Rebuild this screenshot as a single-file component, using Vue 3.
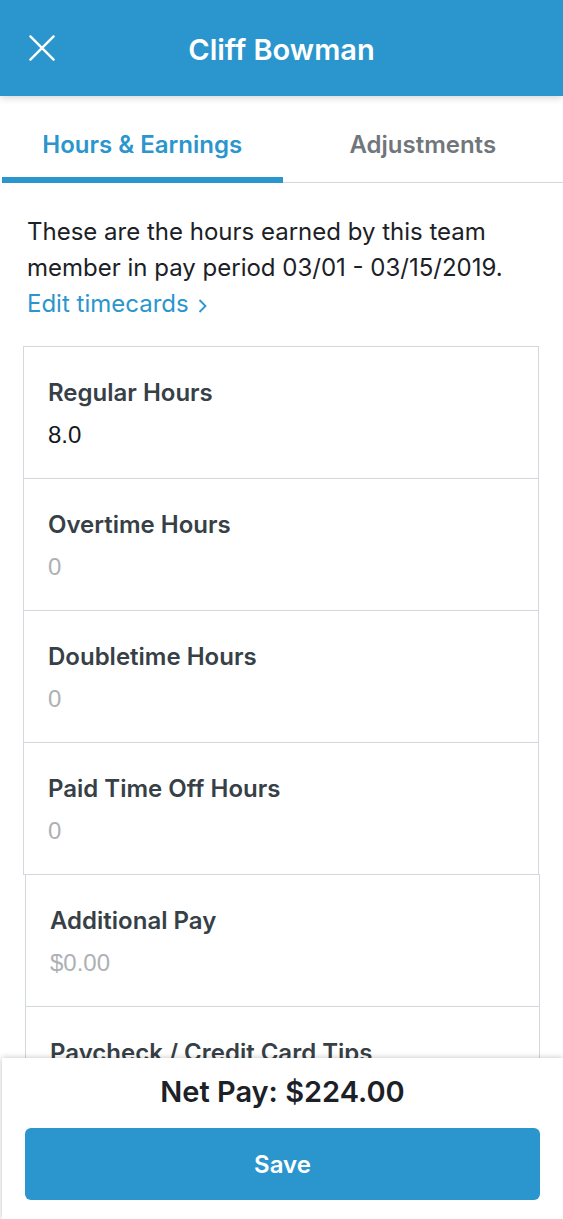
<script setup>
import { ref } from 'vue'

const activeTab = ref('hours')
const tabs = [
  { id: 'hours', label: 'Hours & Earnings' },
  { id: 'adjustments', label: 'Adjustments' },
]

const hourFields = ref([
  { id: 'regular', label: 'Regular Hours', value: '8.0', placeholder: '0' },
  { id: 'overtime', label: 'Overtime Hours', value: '', placeholder: '0' },
  { id: 'doubletime', label: 'Doubletime Hours', value: '', placeholder: '0' },
  { id: 'pto', label: 'Paid Time Off Hours', value: '', placeholder: '0' },
])

const payFields = ref([
  { id: 'additional', label: 'Additional Pay', value: '', placeholder: '$0.00' },
  { id: 'tips', label: 'Paycheck / Credit Card Tips', value: '', placeholder: '$0.00' },
])
</script>

<template>
  <div class="screen">
    <header class="bar">
      <button class="close" type="button" aria-label="Close">
        <svg width="28" height="28" viewBox="0 0 28 28" fill="none" stroke="#fff" stroke-width="2.4" stroke-linecap="round">
          <path d="M2.4 2.4 25.6 25.6M25.6 2.4 2.4 25.6" />
        </svg>
      </button>
      <h1 class="title">Cliff Bowman</h1>
    </header>

    <nav class="tabs" role="tablist">
      <button
        v-for="tab in tabs"
        :key="tab.id"
        type="button"
        role="tab"
        class="tab"
        :class="{ active: activeTab === tab.id }"
        :aria-selected="activeTab === tab.id"
        @click="activeTab = tab.id"
      >{{ tab.label }}</button>
    </nav>

    <main class="content">
      <p class="intro">
        These are the hours earned by this team member in pay period 03/01 - 03/15/2019.
        <a class="edit" href="#timecards">Edit timecards<svg class="chevron" width="10" height="16" viewBox="0 0 10 16" fill="none" stroke="currentColor" stroke-width="1.8"><path d="M1.5 2 7.5 8 1.5 14" /></svg></a>
      </p>

      <div class="group hours">
        <div v-for="field in hourFields" :key="field.id" class="field">
          <label class="label" :for="field.id">{{ field.label }}</label>
          <input :id="field.id" v-model="field.value" class="value" type="text" inputmode="decimal" :placeholder="field.placeholder">
        </div>
      </div>
      <div class="group pay">
        <div v-for="field in payFields" :key="field.id" class="field">
          <label class="label" :for="field.id">{{ field.label }}</label>
          <input :id="field.id" v-model="field.value" class="value" type="text" inputmode="decimal" :placeholder="field.placeholder">
        </div>
      </div>
    </main>

    <footer class="footer">
      <p class="net">Net Pay: $224.00</p>
      <button class="save" type="button">Save</button>
    </footer>
  </div>
</template>

<style>
body {
  background: #fff;
}
</style>

<style scoped>
.screen {
  display: flex;
  flex-direction: column;
  height: 100vh;
  overflow: hidden;
  background: #fff;
  color: #1b2126;
  font-family: Inter, "Liberation Sans", sans-serif;
  font-size: 24px;
}

button {
  border: 0;
  padding: 0;
  background: none;
  font: inherit;
  cursor: pointer;
}

.bar {
  position: relative;
  z-index: 1;
  flex: none;
  display: grid;
  grid-template-columns: 56px 1fr 56px;
  align-items: center;
  height: 96px;
  background: #2b96cd;
  box-shadow: 0 1px 8px rgba(0, 0, 0, 0.2);
}

.close {
  display: flex;
  justify-content: flex-end;
}

.title {
  margin: 0;
  padding-top: 4px;
  color: #fff;
  font-size: 29px;
  font-weight: 600;
  line-height: 36px;
  text-align: center;
}

.tabs {
  flex: none;
  display: grid;
  grid-template-columns: 1fr 1fr;
  padding-left: 2px;
}

.tab {
  height: 87px;
  padding: 16px 0 5px;
  border-bottom: 1px solid #d3d8dc;
  color: #70767c;
  font-weight: 600;
  line-height: 36px;
}

.tab.active {
  padding-bottom: 0;
  border-bottom: 6px solid #2b96cd;
  color: #2b96cd;
}

.content {
  flex: 1;
  min-height: 0;
  overflow-y: auto;
  scrollbar-width: none;
}

.intro {
  margin: 31px 27px 24px;
  line-height: 36px;
}

.edit {
  display: block;
  width: fit-content;
  color: #2b96cd;
  text-decoration: none;
}

.chevron {
  margin-left: 9px;
  vertical-align: -2px;
}

.group {
  border: 1px solid #d3d8dc;
}

.hours {
  margin: 0 24px 0 23px;
}

.pay {
  margin: -1px 23px 0 25px;
}

.field {
  padding: 28px 24px 25px;
}

.field + .field {
  border-top: 1px solid #d3d8dc;
}

.label {
  display: block;
  color: #373f47;
  font-weight: 600;
  line-height: 36px;
}

.value {
  display: block;
  box-sizing: border-box;
  width: 100%;
  height: 36px;
  margin: 6px 0 0;
  padding: 0;
  border: 0;
  outline: 0;
  background: none;
  color: #14191d;
  font-family: "Liberation Sans", Arial, sans-serif;
  font-size: 24px;
}

.value::placeholder {
  color: #adb1b5;
  opacity: 1;
}

.footer {
  position: relative;
  flex: none;
  margin-left: 2px;
  padding: 16px 23px 19px;
  background: #fff;
  box-shadow: 0 0 6px rgba(0, 0, 0, 0.25);
}

.net {
  margin: 0 0 18px;
  font-size: 29px;
  font-weight: 600;
  line-height: 36px;
  text-align: center;
}

.save {
  display: block;
  width: 100%;
  height: 72px;
  border-radius: 6px;
  background: #2b96cd;
  color: #fff;
  font-weight: 600;
}
</style>
